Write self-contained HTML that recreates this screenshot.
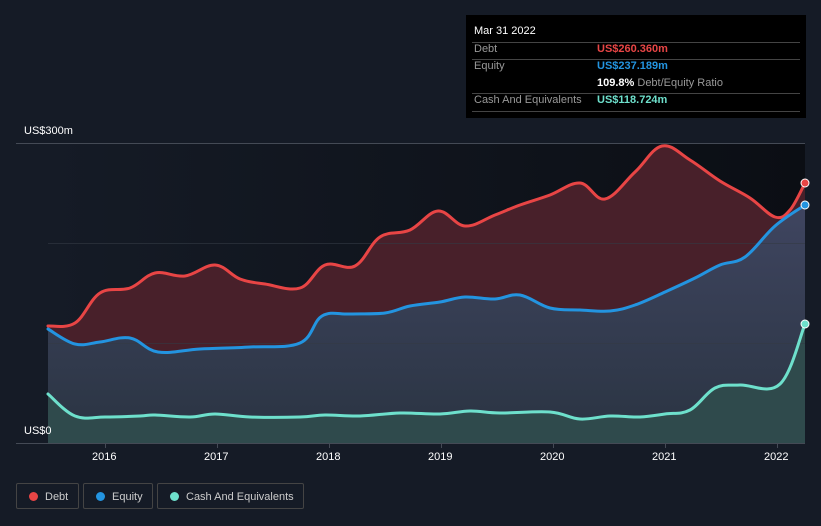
<!DOCTYPE html>
<html><head><style>
body{margin:0;width:821px;height:526px;background:#151b26;font-family:"Liberation Sans",sans-serif;overflow:hidden;position:relative}
.t{position:absolute;color:#fff;font-size:11px}
.tip{position:absolute;left:466px;top:15px;width:340px;height:103px;background:#000;}
.tip .r{position:absolute;left:8px;right:8px;font-size:11px;color:#999}
.tip .l{position:absolute;left:0;right:0;height:1px;background:#444}
.leg{position:absolute;top:483px;height:26px;border:1px solid #444;border-radius:2px;color:#ccc;font-size:11px;line-height:26px;box-sizing:border-box}
.leg i{position:absolute;top:8px;left:12px;width:9px;height:9px;border-radius:50%}
</style></head><body>
<svg width="821" height="526" style="position:absolute;left:0;top:0">
<defs>
<linearGradient id="bg" x1="0" x2="1" y1="0" y2="0"><stop offset="0" stop-color="#151b26"/><stop offset="1" stop-color="#0b0e14"/></linearGradient>
<linearGradient id="eq" x1="0" x2="0" y1="0" y2="1"><stop offset="0" stop-color="#3f4560"/><stop offset="1" stop-color="#2a3442"/></linearGradient>
</defs>
<rect x="48" y="143" width="757" height="300" fill="url(#bg)"/>
<path id="fd" fill="#48202a"/>
<path id="fe" fill="url(#eq)"/>
<path id="fc" fill="#2f4a4c"/>
<line x1="16" x2="805" y1="143.5" y2="143.5" stroke="#444a55"/>
<line x1="48" x2="805" y1="243.5" y2="243.5" stroke="#333a45" stroke-opacity=".6"/>
<line x1="48" x2="805" y1="343.5" y2="343.5" stroke="#333a45" stroke-opacity=".6"/>
<line x1="16" x2="805" y1="443.5" y2="443.5" stroke="#444a55"/>
<g fill="none" stroke-width="3" stroke-linejoin="round" stroke-linecap="round">
<path id="ld" stroke="#e84545"/>
<path id="le" stroke="#2394e0"/>
<path id="lc" stroke="#6ee0cc"/>
</g>
<circle cx="805" cy="183" r="4" fill="#e84545" stroke="#fff" stroke-width="1"/>
<circle cx="805" cy="205" r="4" fill="#2394e0" stroke="#fff" stroke-width="1"/>
<circle cx="805" cy="324" r="4" fill="#6ee0cc" stroke="#fff" stroke-width="1"/>
<g stroke="#444a55"><line x1="105.5" x2="105.5" y1="443" y2="448"/><line x1="217.5" x2="217.5" y1="443" y2="448"/><line x1="329.5" x2="329.5" y1="443" y2="448"/><line x1="441.5" x2="441.5" y1="443" y2="448"/><line x1="553.5" x2="553.5" y1="443" y2="448"/><line x1="665.5" x2="665.5" y1="443" y2="448"/><line x1="777.5" x2="777.5" y1="443" y2="448"/></g>
</svg>
<script>
function sm(p){var d="M"+p[0][0]+","+p[0][1];for(var i=0;i<p.length-1;i++){var a=p[i-1]||p[i],b=p[i],c=p[i+1],e=p[i+2]||c;var t=0.18;d+=" C"+(b[0]+(c[0]-a[0])*t).toFixed(1)+","+(b[1]+(c[1]-a[1])*t).toFixed(1)+" "+(c[0]-(e[0]-b[0])*t).toFixed(1)+","+(c[1]-(e[1]-b[1])*t).toFixed(1)+" "+c[0]+","+c[1];}return d;}
var D=[[48,326],[75,323],[100,293],[130,288],[155,273],[185,276],[215,265],[240,279],[265,284],[300,288],[325,265],[355,266],[380,237],[410,230],[438,211],[465,226],[495,215],[520,205],[550,195],[580,183],[605,199],[635,172],[662,146],[690,160],[720,181],[750,198],[775,217],[790,210],[805,183]];
var E=[[48,329],[75,344],[100,342],[130,338],[158,352],[200,349],[250,347],[300,343],[322,316],[350,314],[385,313],[410,306],[440,302],[465,297],[495,299],[520,295],[550,308],[580,310],[610,311],[635,305],[665,292],[695,278],[720,265],[745,257],[775,226],[805,205]];
var C=[[48,394],[75,416],[105,417],[140,416],[155,415],[190,417],[215,414],[250,417],[300,417],[325,415],[360,416],[400,413],[440,414],[470,411],[500,413],[550,412],[580,419],[610,416],[640,417],[665,414],[690,410],[715,388],[740,385],[780,384],[805,324]];
[["d",D],["e",E],["c",C]].forEach(function(x){var s=sm(x[1]);document.getElementById("l"+x[0]).setAttribute("d",s);document.getElementById("f"+x[0]).setAttribute("d",s+" L805,443 L48,443Z");});
</script>
<div class="t" style="left:24px;top:125px">US$300m</div>
<div class="t" style="left:24px;top:425px">US$0</div>
<div class="t" style="left:92px;top:451px">2016</div>
<div class="t" style="left:204px;top:451px">2017</div>
<div class="t" style="left:316px;top:451px">2018</div>
<div class="t" style="left:428px;top:451px">2019</div>
<div class="t" style="left:540px;top:451px">2020</div>
<div class="t" style="left:652px;top:451px">2021</div>
<div class="t" style="left:764px;top:451px">2022</div>
<div class="tip">
<div class="r" style="top:10px;color:#fff">Mar 31 2022</div>
<div class="l" style="top:27px;left:6px;right:6px"></div>
<div class="r" style="top:28px">Debt<span style="position:absolute;left:123px;color:#e84545;font-weight:bold">US$260.360m</span></div>
<div class="l" style="top:44px;left:6px;right:6px"></div>
<div class="r" style="top:45px">Equity<span style="position:absolute;left:123px;color:#2394e0;font-weight:bold">US$237.189m</span></div>
<div class="r" style="top:62px"><span style="position:absolute;left:123px;white-space:nowrap"><b style="color:#fff">109.8%</b> Debt/Equity Ratio</span></div>
<div class="l" style="top:78px;left:6px;right:6px"></div>
<div class="r" style="top:79px">Cash And Equivalents<span style="position:absolute;left:123px;color:#6ee0cc;font-weight:bold">US$118.724m</span></div>
<div class="l" style="top:96px;left:6px;right:6px"></div>
</div>
<div class="leg" style="left:16px;width:63px"><i style="background:#e84545"></i><span style="margin-left:28px">Debt</span></div>
<div class="leg" style="left:83px;width:70px"><i style="background:#2394e0"></i><span style="margin-left:28px">Equity</span></div>
<div class="leg" style="left:157px;width:147px"><i style="background:#6ee0cc"></i><span style="margin-left:28px">Cash And Equivalents</span></div>
</body></html>
